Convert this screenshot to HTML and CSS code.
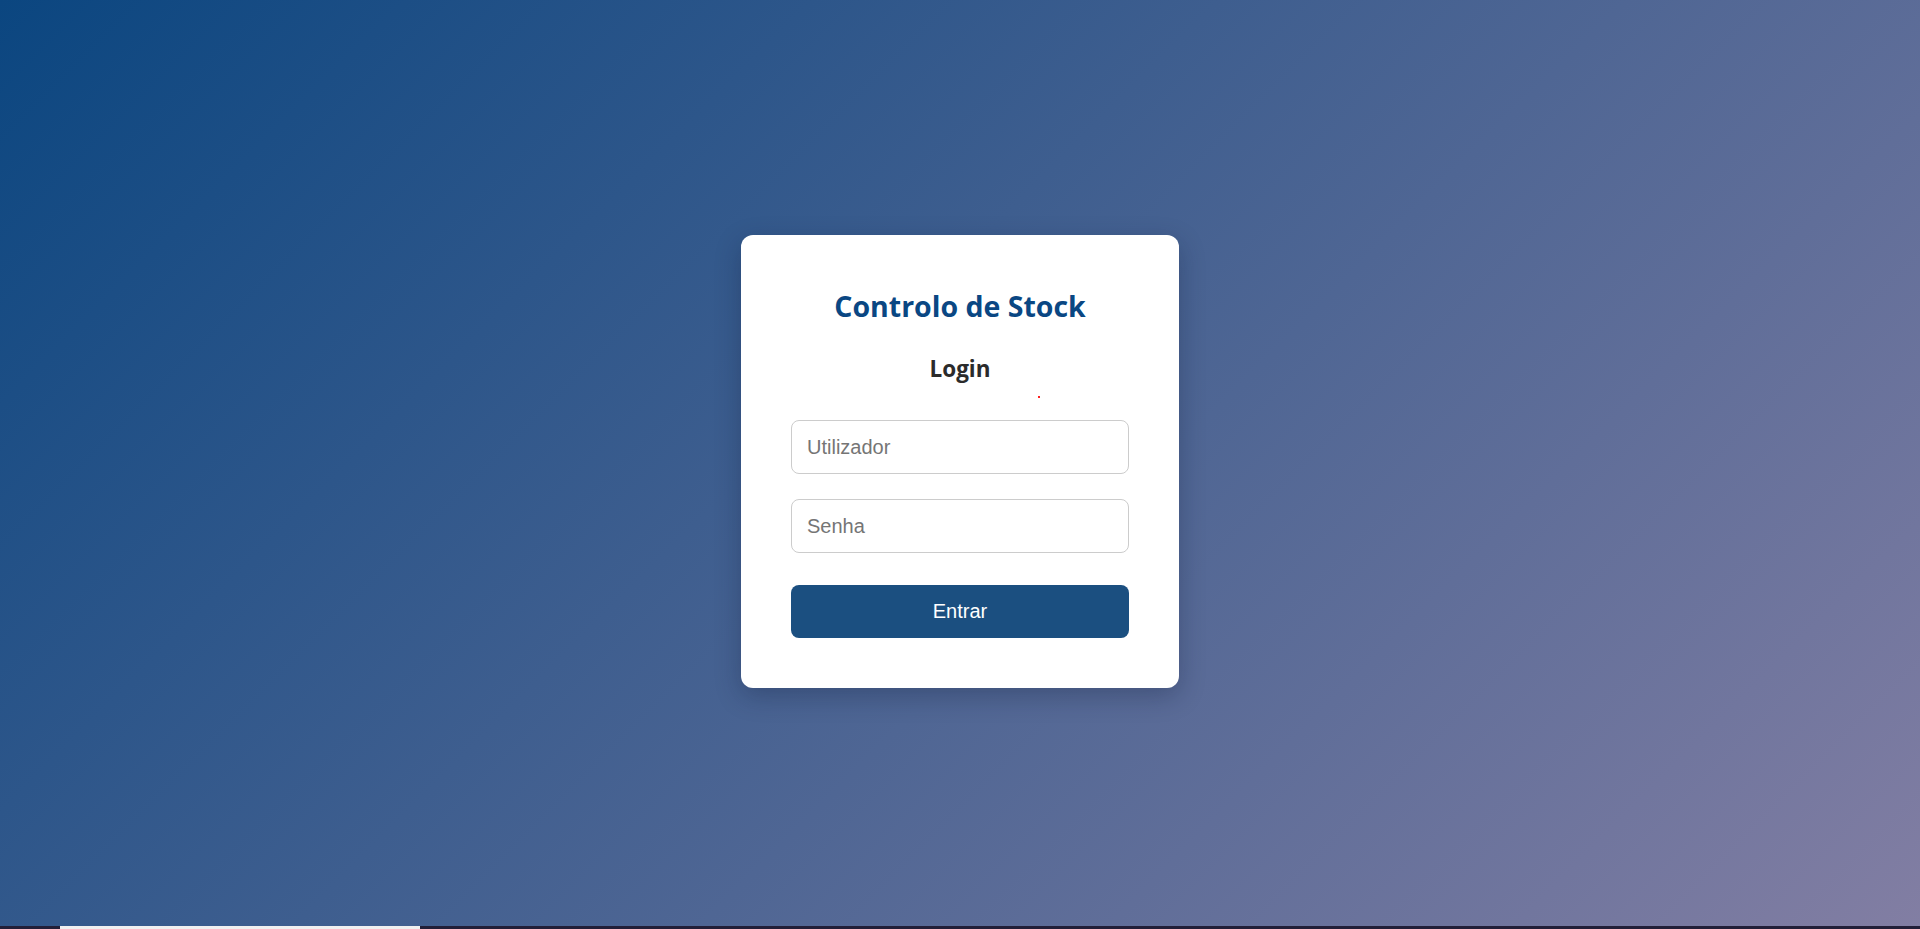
FILE: index.html
```html
<!DOCTYPE html>
<html lang="pt">
<head>
<meta charset="utf-8">
<title>Controlo de Stock - Login</title>
<link rel="stylesheet" href="styles.css">
</head>
<body>
<main class="stage">
  <form class="card" onsubmit="return false;">
    <h1 class="title">Controlo de Stock</h1>
    <h2 class="subtitle">Login</h2>
    <div class="error"><span class="error-dot"></span></div>
    <input class="field" type="text" placeholder="Utilizador">
    <input class="field field-last" type="password" placeholder="Senha">
    <button class="btn" type="submit">Entrar</button>
  </form>
</main>
<div class="bottom-bar"><div class="bottom-thumb"></div></div>
</body>
</html>
```
FILE: styles.css
```css
* { box-sizing: border-box; }
html, body { height: 100%; }
body {
  margin: 0;
  display: flex;
  flex-direction: column;
  font-family: "Open Sans", "Noto Sans", sans-serif;
  background: linear-gradient(135deg, #0b4680 0%, #827ea3 100%);
  overflow: hidden;
}
.stage {
  flex: 1;
  display: flex;
  align-items: center;
  justify-content: center;
  padding-bottom: 3px;
}
.card {
  width: 438px;
  background: #ffffff;
  border-radius: 12px;
  padding: 53px 50px 50px;
  box-shadow: 0 8px 26px rgba(10, 20, 50, 0.28);
  display: flex;
  flex-direction: column;
}
.title {
  margin: 0;
  font-size: 28.5px;
  line-height: 36px;
  font-weight: 700;
  color: #0a4783;
  text-align: center;
}
.subtitle {
  margin: 31px 0 0;
  font-size: 22.5px;
  line-height: 28px;
  font-weight: 700;
  color: #2b2b2b;
  text-align: center;
}
.error {
  height: 37px;
  padding-top: 13px;
  display: flex;
  justify-content: center;
}
.error-dot {
  width: 2px;
  height: 2px;
  background: #ff2020;
  margin-left: 158px;
}
.field {
  height: 54px;
  width: 100%;
  border: 1px solid #cccccc;
  border-radius: 8px;
  padding: 0 15px;
  font-family: "Liberation Sans", Arial, sans-serif;
  font-size: 20px;
  color: #333;
  background: #fff;
  outline: none;
  margin: 0 0 25px;
}
.field::placeholder { color: #757575; }
.field-last { margin-bottom: 32px; }
.btn {
  height: 53px;
  width: 100%;
  border: none;
  border-radius: 8px;
  background: #1b4f80;
  color: #ffffff;
  font-family: "Liberation Sans", Arial, sans-serif;
  font-size: 20px;
  cursor: pointer;
}
.bottom-bar {
  height: 3px;
  flex: 0 0 3px;
  background: #221f38;
  padding-left: 60px;
}
.bottom-thumb {
  width: 360px;
  height: 3px;
  background: #f0f0f0;
}
```
